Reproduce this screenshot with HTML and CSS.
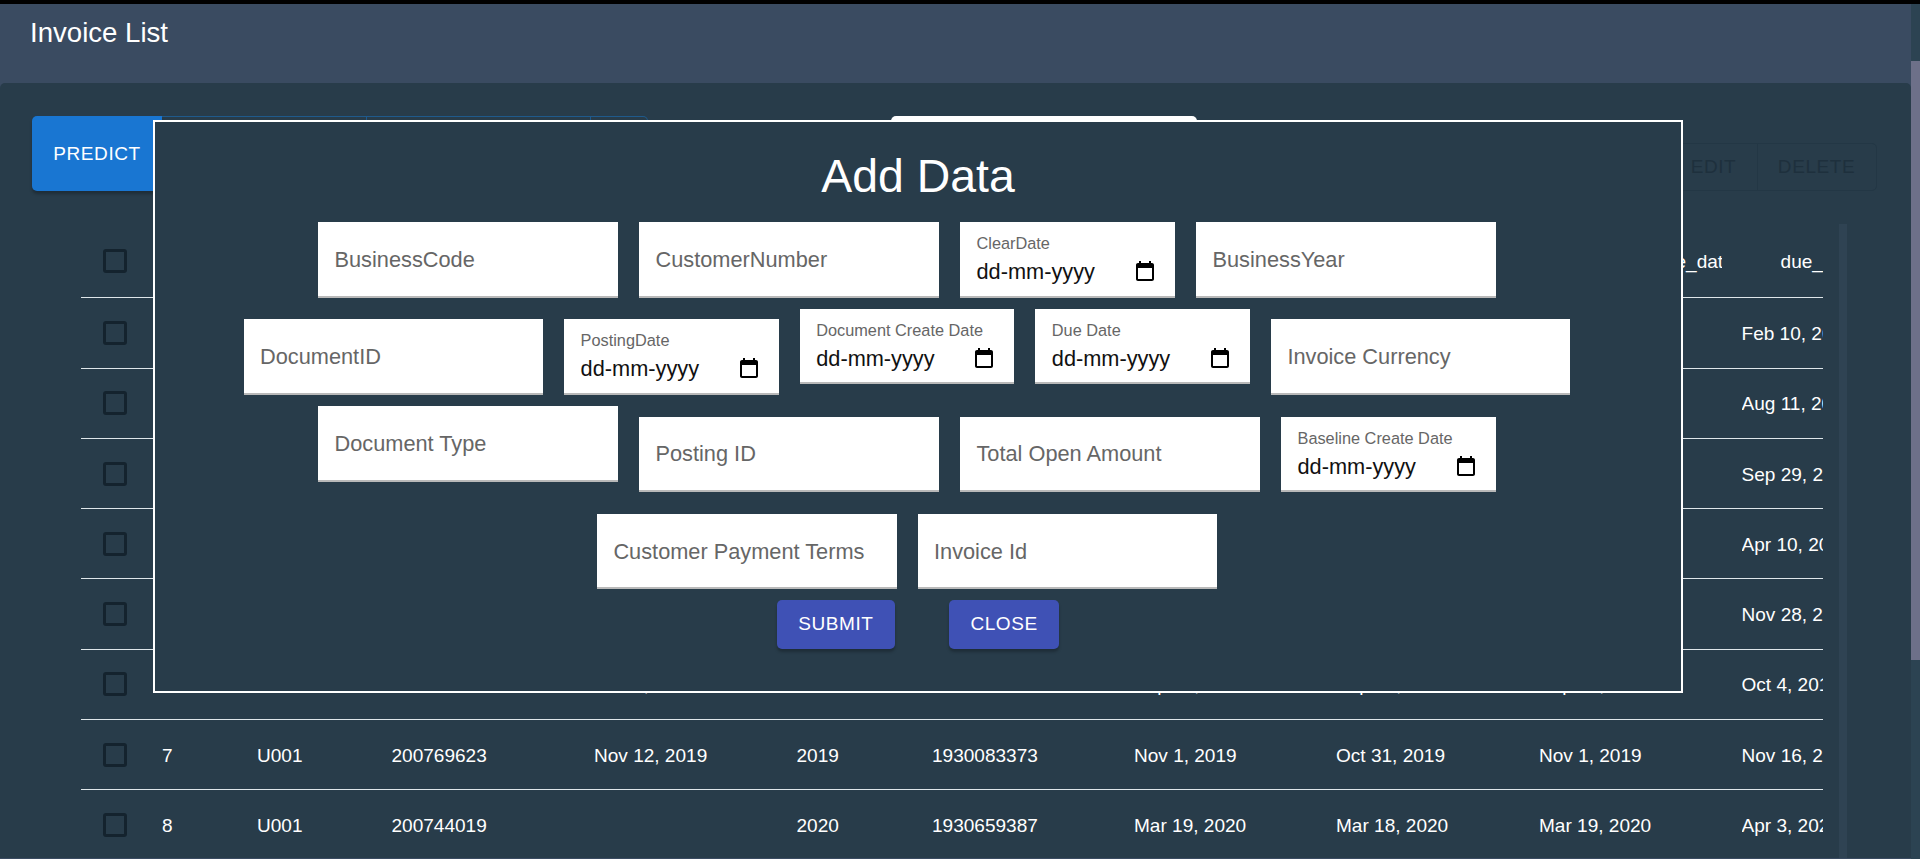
FILE: index.html
```html
<!DOCTYPE html>
<html lang="en">
<head>
<meta charset="utf-8">
<title>Invoice List</title>
<link rel="stylesheet" href="styles.css">
</head>
<body>
<div class="topstrip"></div>
<div class="page">
  <div class="main">
    <header class="appbar"><h1 class="apptitle">Invoice List</h1></header>
    <section class="card">
      <div class="toolbar">
        <div class="group group-left">
          <button class="gbtn gbtn-predict">PREDICT</button>
          <button class="gbtn gbtn-analytics">ANALYTICS VIEW</button>
          <button class="gbtn gbtn-search">ADVANCED SEARCH</button>
          <button class="gbtn gbtn-refresh"></button>
        </div>
        <div class="searchbox"></div>
        <div class="group group-right">
          <button class="rbtn rbtn-add">ADD</button>
          <button class="rbtn rbtn-edit">EDIT</button>
          <button class="rbtn rbtn-delete">DELETE</button>
        </div>
      </div>
      <div class="tablearea">
        <div class="table">
          <div class="row row-head">
            <div class="cell"><span class="check"></span></div>
            <div class="cell">Sl no</div><div class="cell">business_code</div><div class="cell">cust_number</div><div class="cell">clear_date</div><div class="cell">buisness_year</div><div class="cell">doc_id</div><div class="cell">posting_date</div><div class="cell">document_create_date</div><div class="cell">document_create_date</div><div class="cell">due_in_date</div>
          </div>
          <div class="row">
            <div class="cell"><span class="check"></span></div>
            <div class="cell">1</div><div class="cell">U001</div><div class="cell">200769623</div><div class="cell">Feb 11, 2020</div><div class="cell">2020</div><div class="cell">1930438491</div><div class="cell">Jan 26, 2020</div><div class="cell">Jan 25, 2020</div><div class="cell">Jan 26, 2020</div><div class="cell">Feb 10, 2020</div>
          </div>
          <div class="row">
            <div class="cell"><span class="check"></span></div>
            <div class="cell">2</div><div class="cell">U001</div><div class="cell">200980828</div><div class="cell">Aug 8, 2019</div><div class="cell">2019</div><div class="cell">1929646410</div><div class="cell">Jul 22, 2019</div><div class="cell">Jul 22, 2019</div><div class="cell">Jul 22, 2019</div><div class="cell">Aug 11, 2019</div>
          </div>
          <div class="row">
            <div class="cell"><span class="check"></span></div>
            <div class="cell">3</div><div class="cell">U001</div><div class="cell">200792734</div><div class="cell">Dec 30, 2019</div><div class="cell">2019</div><div class="cell">1929873765</div><div class="cell">Sep 14, 2019</div><div class="cell">Sep 14, 2019</div><div class="cell">Sep 14, 2019</div><div class="cell">Sep 29, 2019</div>
          </div>
          <div class="row">
            <div class="cell"><span class="check"></span></div>
            <div class="cell">4</div><div class="cell">CA02</div><div class="cell">140105686</div><div class="cell"></div><div class="cell">2020</div><div class="cell">2960623488</div><div class="cell">Mar 30, 2020</div><div class="cell">Mar 30, 2020</div><div class="cell">Mar 31, 2020</div><div class="cell">Apr 10, 2020</div>
          </div>
          <div class="row">
            <div class="cell"><span class="check"></span></div>
            <div class="cell">5</div><div class="cell">U001</div><div class="cell">200769623</div><div class="cell">Nov 25, 2019</div><div class="cell">2019</div><div class="cell">1930147974</div><div class="cell">Nov 13, 2019</div><div class="cell">Nov 13, 2019</div><div class="cell">Nov 13, 2019</div><div class="cell">Nov 28, 2019</div>
          </div>
          <div class="row">
            <div class="cell"><span class="check"></span></div>
            <div class="cell">6</div><div class="cell">U001</div><div class="cell">200769623</div><div class="cell">Nov 4, 2019</div><div class="cell">2019</div><div class="cell">1929914094</div><div class="cell">Sep 19, 2019</div><div class="cell">Sep 18, 2019</div><div class="cell">Sep 19, 2019</div><div class="cell">Oct 4, 2019</div>
          </div>
          <div class="row">
            <div class="cell"><span class="check"></span></div>
            <div class="cell">7</div><div class="cell">U001</div><div class="cell">200769623</div><div class="cell">Nov 12, 2019</div><div class="cell">2019</div><div class="cell">1930083373</div><div class="cell">Nov 1, 2019</div><div class="cell">Oct 31, 2019</div><div class="cell">Nov 1, 2019</div><div class="cell">Nov 16, 2019</div>
          </div>
          <div class="row">
            <div class="cell"><span class="check"></span></div>
            <div class="cell">8</div><div class="cell">U001</div><div class="cell">200744019</div><div class="cell"></div><div class="cell">2020</div><div class="cell">1930659387</div><div class="cell">Mar 19, 2020</div><div class="cell">Mar 18, 2020</div><div class="cell">Mar 19, 2020</div><div class="cell">Apr 3, 2020</div>
          </div>
        </div>
        <div class="innerbar"></div>
      </div>
    </section>
  </div>
  <div class="pagebar"><div class="pagethumb"></div></div>
</div>

<div class="modal">
  <h2 class="modal-title">Add Data</h2>
  <div class="form">
    <div class="formrow">
      <div class="field"><span class="ph">BusinessCode</span></div>
      <div class="field"><span class="ph">CustomerNumber</span></div>
      <div class="field field-date">
        <span class="dlabel">ClearDate</span>
        <span class="dvalue"><span>dd-mm-yyyy</span><svg class="cal" viewBox="0 0 24 24"><path d="M19 3h-1V1h-2v2H8V1H6v2H5c-1.11 0-1.99.9-1.99 2L3 19c0 1.1.89 2 2 2h14c1.1 0 2-.9 2-2V5c0-1.1-.9-2-2-2zm0 16H5V8h14v11z"/></svg></span>
      </div>
      <div class="field"><span class="ph">BusinessYear</span></div>
    </div>
    <div class="formrow formrow-2">
      <div class="field"><span class="ph">DocumentID</span></div>
      <div class="field field-date">
        <span class="dlabel">PostingDate</span>
        <span class="dvalue"><span>dd-mm-yyyy</span><svg class="cal" viewBox="0 0 24 24"><path d="M19 3h-1V1h-2v2H8V1H6v2H5c-1.11 0-1.99.9-1.99 2L3 19c0 1.1.89 2 2 2h14c1.1 0 2-.9 2-2V5c0-1.1-.9-2-2-2zm0 16H5V8h14v11z"/></svg></span>
      </div>
      <div class="field field-date raised">
        <span class="dlabel">Document Create Date</span>
        <span class="dvalue"><span>dd-mm-yyyy</span><svg class="cal" viewBox="0 0 24 24"><path d="M19 3h-1V1h-2v2H8V1H6v2H5c-1.11 0-1.99.9-1.99 2L3 19c0 1.1.89 2 2 2h14c1.1 0 2-.9 2-2V5c0-1.1-.9-2-2-2zm0 16H5V8h14v11z"/></svg></span>
      </div>
      <div class="field field-date raised">
        <span class="dlabel">Due Date</span>
        <span class="dvalue"><span>dd-mm-yyyy</span><svg class="cal" viewBox="0 0 24 24"><path d="M19 3h-1V1h-2v2H8V1H6v2H5c-1.11 0-1.99.9-1.99 2L3 19c0 1.1.89 2 2 2h14c1.1 0 2-.9 2-2V5c0-1.1-.9-2-2-2zm0 16H5V8h14v11z"/></svg></span>
      </div>
      <div class="field"><span class="ph">Invoice Currency</span></div>
    </div>
    <div class="formrow formrow-3">
      <div class="field raised"><span class="ph">Document Type</span></div>
      <div class="field"><span class="ph">Posting ID</span></div>
      <div class="field"><span class="ph">Total Open Amount</span></div>
      <div class="field field-date">
        <span class="dlabel">Baseline Create Date</span>
        <span class="dvalue"><span>dd-mm-yyyy</span><svg class="cal" viewBox="0 0 24 24"><path d="M19 3h-1V1h-2v2H8V1H6v2H5c-1.11 0-1.99.9-1.99 2L3 19c0 1.1.89 2 2 2h14c1.1 0 2-.9 2-2V5c0-1.1-.9-2-2-2zm0 16H5V8h14v11z"/></svg></span>
      </div>
    </div>
    <div class="formrow formrow-4">
      <div class="field"><span class="ph">Customer Payment Terms</span></div>
      <div class="field"><span class="ph">Invoice Id</span></div>
    </div>
  </div>
  <div class="actions">
    <button class="mbtn">SUBMIT</button>
    <button class="mbtn">CLOSE</button>
  </div>
</div>
</body>
</html>
```
FILE: styles.css
```css
* { box-sizing: border-box; }
html, body { margin: 0; height: 859px; overflow: hidden; }
body {
  background: #3a4b61;
  color: #fff;
  font-family: "Liberation Sans", Arial, sans-serif;
  position: relative;
}
button { font-family: inherit; margin: 0; cursor: pointer; }

.topstrip { height: 4px; background: #000; }
.page { display: flex; height: 855px; }
.main { flex: 1; min-width: 0; }
.pagebar { width: 9px; background: #2c4352; }
.pagethumb { margin-top: 57px; height: 599px; background: #6d7089; }

.appbar { height: 79px; padding: 15px 0 0 30px; background: #3a4b61; }
.apptitle { margin: 0; font-size: 27.6px; line-height: 28px; font-weight: 400; }

.card {
  height: 775px;
  overflow: hidden;
  background: #283c4a;
  border-radius: 5px 5px 0 0;
  padding-top: 33px;
}
.toolbar { display: flex; height: 75px; padding: 0 34.5px 0 32px; }
.group { display: flex; }
.group-left { width: 616px; border-radius: 5px; }
.gbtn {
  border: 1px solid #1f5a8c;
  border-left-width: 0;
  background: transparent;
  color: #1976d2;
  font-size: 19.04px;
  letter-spacing: .54px;
}
.gbtn-predict {
  width: 130px;
  background: #1976d2;
  color: #fff;
  border: 0;
  border-radius: 5px 0 0 5px;
  box-shadow: 0 3px 3px rgba(0,0,0,.25);
}
.gbtn-analytics { width: 205px; }
.gbtn-search { width: 224px; }
.gbtn-refresh { width: 57px; border-radius: 0 5px 5px 0; }

.searchbox { width: 306px; margin-left: 243px; background: #fff; border-radius: 5px 5px 0 0; }

.group-right { margin-left: auto; align-self: flex-end; height: 48.5px; border: 1px solid #233745; border-radius: 5px; }
.rbtn {
  border: 0;
  border-left: 1px solid #233745;
  background: transparent;
  color: #1e303d;
  font-size: 19.04px;
  letter-spacing: .54px;
  padding: 0;
}
.rbtn-add { border-left: 0; width: 85px; }
.rbtn-edit { width: 87px; }
.rbtn-delete { width: 119px; }

.tablearea { display: flex; margin: 33px 0 0 81px; height: 635px; }
.table { width: 1742px; overflow: hidden; }
.innerbar { width: 8px; margin-left: 16px; background: #2f4353; }

.row {
  display: grid;
  grid-template-columns: 81px 95px 134.5px 202.5px 202.5px 135.5px 202px 202px 203px 202.5px 202.5px;
  height: 70.3px;
  border-bottom: 1px solid #dfe6ea;
  font-size: 19.04px;
  align-items: center;
}
.row-head { height: 74.3px; }
.row-head .cell { text-align: center; }
.row-head .cell:first-child { text-align: left; }
.cell { min-width: 0; white-space: nowrap; overflow: hidden; margin-right: 19.5px; padding-top: 2px; }
.cell:first-child { margin: 0; padding: 0 0 0 21.5px; display: flex; }
.check { display: block; width: 24px; height: 24px; border: 3px solid #14232e; border-radius: 3px; }

.modal {
  position: absolute;
  left: 153px;
  top: 120px;
  width: 1530px;
  height: 573px;
  background: #283c4a;
  border: 2px solid #fff;
  padding-top: 24px;
}
.modal-title { margin: 0 0 16px; font-size: 46.4px; line-height: 60px; font-weight: 400; text-align: center; }
.form { padding-right: 22px; }
.formrow { display: flex; justify-content: center; align-items: flex-end; gap: 21px; }
.formrow-2 { margin-top: 11px; }
.formrow-3 { margin-top: 11.5px; }
.formrow-4 { margin-top: 22px; }
.field {
  flex: none;
  width: 300px;
  height: 75.6px;
  background: #fff;
  border-bottom: 2px solid #b9b9b9;
  padding: 2px 17px 0 16.5px;
  display: flex;
  align-items: center;
}
.raised { margin-bottom: 10.5px; }
.ph { font-size: 21.76px; color: #666; white-space: nowrap; }
.field-date {
  width: 215px;
  padding: 12px 18px 0 16.5px;
  flex-direction: column;
  align-items: stretch;
}
.formrow-2 .field { width: 299.6px; }
.formrow-2 .field-date { width: 214.6px; }
.formrow-4 .field { width: 299.6px; height: 75px; }
.dlabel { font-size: 16.32px; line-height: 18px; color: #666; white-space: nowrap; }
.dvalue {
  display: flex;
  justify-content: space-between;
  align-items: center;
  margin-top: 7px;
  height: 26px;
  font-size: 21.76px;
  color: #111;
}
.cal { width: 24px; height: 24px; fill: #000; display: block; }

.actions { display: flex; justify-content: center; gap: 54px; margin-top: 10.5px; }
.mbtn {
  height: 49px;
  padding: 0 21.5px;
  border: 0;
  border-radius: 5px;
  background: #3f51b5;
  color: #fff;
  font-size: 19.04px;
  letter-spacing: .54px;
  box-shadow: 0 3px 3px rgba(0,0,0,.25);
}
```
